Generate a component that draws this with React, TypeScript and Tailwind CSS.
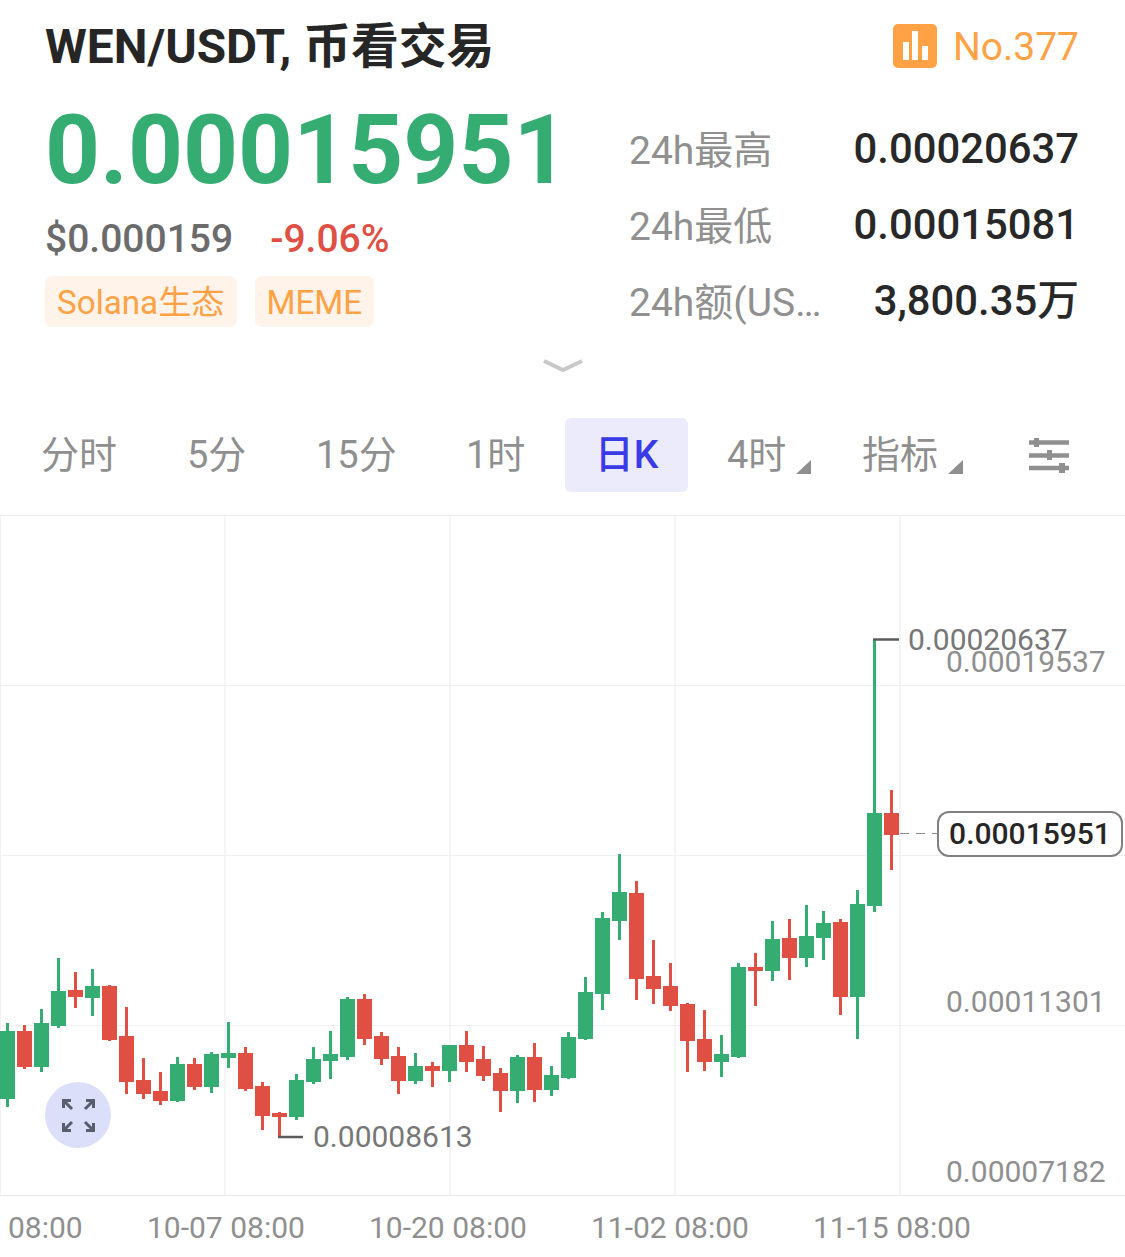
const F = "font-['Roboto','Noto_Sans_CJK_SC',sans-serif]";

type C = [number, number, number, number, number, number];
// [x, up(1)/down(0), wickTop, bodyTop, bodyBottom, wickBottom]
const candles: C[] = [
  [7.5,1,1023,1031,1099,1107],[24.5,0,1025,1031,1067,1069],[41.5,1,1009,1023,1067,1072],[58.5,1,958,991,1026,1028],
  [75.5,0,972,990,997,1008],[92.5,1,969,986,998,1016],[109.5,0,985,986,1040,1041],[126.5,0,1007,1036,1082,1094],
  [143.5,0,1058,1080,1094,1099],[160.5,0,1072,1091,1101,1105],[177.5,1,1057,1064,1101,1102],[194.5,0,1058,1064,1087,1090],
  [211.5,1,1052,1054,1087,1093],[228.5,1,1022,1053,1058,1068],[245.5,0,1047,1053,1089,1091],[262.5,0,1082,1086,1116,1130],
  [279.5,0,1112,1113,1117,1137],[296.5,1,1074,1080,1117,1120],[313.5,1,1047,1059,1082,1084],[330.5,1,1031,1054,1061,1079],
  [347.5,1,997,999,1057,1060],[364.5,0,994,999,1039,1045],[381.5,0,1032,1036,1059,1065],[398.5,0,1047,1056,1081,1094],
  [415.5,1,1053,1066,1081,1084],[432.5,0,1062,1066,1071,1087],[449.5,1,1045,1045,1071,1082],[466.5,0,1031,1045,1062,1072],
  [483.5,0,1046,1059,1076,1081],[500.5,0,1068,1073,1091,1112],[517.5,1,1055,1057,1091,1103],[534.5,0,1043,1057,1090,1102],
  [551.5,1,1066,1075,1090,1096],[568.5,1,1032,1037,1078,1079],[585.5,1,977,992,1039,1040],[602.5,1,912,918,994,1010],
  [619.5,1,854,892,921,940],[636.5,0,881,893,979,1000],[653.5,0,940,976,989,1004],[670.5,0,963,986,1006,1011],
  [687.5,0,1003,1004,1041,1072],[704.5,0,1010,1039,1062,1071],[721.5,1,1035,1054,1062,1077],[738.5,1,963,967,1057,1058],
  [755.5,0,953,967,971,1006],[772.5,1,921,939,971,981],[789.5,0,919,938,958,980],[806.5,1,905,936,958,967],
  [823.5,1,911,923,938,960],[840.5,0,919,922,997,1015],[857.5,1,890,904,997,1039],[874.5,1,639,813,906,912],
  [891.5,0,790,813,835,870],
];

function ChartLayer() {
  const top = 515;
  return (
    <svg width="1125" height="681" viewBox="0 515 1125 681" className="block">
      {[685.5, 855.5, 1025.5].map((y) => (
        <line key={y} x1="0" x2="1125" y1={y} y2={y} stroke="#f0f0f4" strokeWidth="1" />
      ))}
      <line x1="0" x2="1125" y1={top + 0.5} y2={top + 0.5} stroke="#ececf0" />
      <line x1="0" x2="1125" y1="1195.5" y2="1195.5" stroke="#e8e8ec" />
      {[0.5, 225, 450, 675, 900].map((x) => (
        <line key={x} x1={x} x2={x} y1="515" y2="1195" stroke="#f2f2f5" strokeWidth={x < 1 ? 1 : 1.5} />
      ))}
      {candles.map(([x, up, wt, bt, bb, wb]) => (
        <g key={x} fill={up ? "#35ad72" : "#e04f43"}>
          <rect x={x - 1.5} y={wt} width="3" height={wb - wt} />
          <rect x={x - 7.5} y={bt} width="15" height={Math.max(bb - bt, 1)} />
        </g>
      ))}
      <path d="M873 639.500H899" stroke="#5c5c5c" strokeWidth="2.500" />
      <path d="M278 1137H303" stroke="#5c5c5c" strokeWidth="2.500" />
      <path d="M900 833.500H937" stroke="#888" strokeWidth="1" strokeDasharray="9 7" />
    </svg>
  );
}

function Label({ className, children }: { className: string; children: React.ReactNode }) {
  return <span className={`absolute text-[30px] leading-[36px] text-[#8f8f8f] ${className}`}>{children}</span>;
}

function Stat({ label, value }: { label: string; value: string }) {
  return (
    <div className="flex h-[76px] items-center justify-between">
      <span className="mt-[3px] w-[196px] truncate text-[39px] text-[#909090]">{label}</span>
      <span className="mb-[1px] text-[41.800px] font-medium text-[#282828]">{value}</span>
    </div>
  );
}

function Tab({ children, className = "" }: { children: React.ReactNode; className?: string }) {
  return <span className={`relative text-[38px] leading-[74px] text-[#8f8f8f] ${className}`}>{children}</span>;
}

function Corner() {
  return (
    <svg width="15" height="14" viewBox="0 0 15 14" className="absolute right-[-25px] top-[27px]">
      <path d="M15 0V14H0Z" fill="#8f8f8f" />
    </svg>
  );
}

function XTick({ className, children }: { className: string; children: React.ReactNode }) {
  return <span className={`absolute top-[14px] text-[30px] leading-[36px] text-[#8f8f8f] ${className}`}>{children}</span>;
}

export default function App() {
  return (
    <div className={`${F} relative h-[1257px] w-[1125px] overflow-hidden bg-white`}>
      <header className="flex h-[92px] items-center justify-between pl-[45px] pr-[46px]">
        <h1 className="mt-[3px] text-[47.800px] font-bold text-[#262626]">WEN/USDT, 币看交易</h1>
        <div className="flex items-center gap-[16px]">
          <svg width="44" height="44" viewBox="0 0 44 44" className="mt-[-1px]">
            <rect width="44" height="44" rx="5" fill="#ffa245" />
            <path d="M10 18h6v18h-6zM19 7h6v29h-6zM29 22h6v14h-6z" fill="#fff" />
          </svg>
          <span className="mt-[2px] text-[39px] text-[#ffa245]">No.377</span>
        </div>
      </header>

      <section className="flex h-[258px] justify-between pl-[45px] pr-[46px]">
        <div>
          <div className="h-[120px] text-[96px] leading-[116px] font-bold text-[#35ad72]">0.00015951</div>
          <div className="flex h-[54px] items-center gap-[37px] text-[39px] font-medium">
            <span className="text-[#6b6b6b]">$0.000159</span>
            <span className="text-[#e04f43]">-9.06%</span>
          </div>
          <div className="mt-[10px] flex gap-[18px]">
            <span className="flex h-[51px] items-center rounded-[7px] bg-[#fff3ea] px-[12px] pt-[3px] text-[33.200px] text-[#ffa245]">Solana生态</span>
            <span className="flex h-[51px] items-center rounded-[7px] bg-[#fff3ea] px-[12px] pt-[3px] text-[33.200px] text-[#ffa245]">MEME</span>
          </div>
        </div>
        <div className="w-[450px] pt-[20px]">
          <Stat label="24h最高" value="0.00020637" />
          <Stat label="24h最低" value="0.00015081" />
          <Stat label="24h额(USDT)" value="3,800.35万" />
        </div>
      </section>

      <div className="flex h-[68px] justify-center pt-[8px]">
        <svg width="42" height="16" viewBox="0 0 42 16">
          <path d="M2 3L21 12L40 3" fill="none" stroke="#c9c9c9" strokeWidth="4" />
        </svg>
      </div>

      <nav className="flex h-[97px] items-start">
        <div className="relative flex h-[74px] w-full items-center">
          <div className="ml-[41px] w-[146px]"><Tab>分时</Tab></div>
          <div className="w-[129px]"><Tab>5分</Tab></div>
          <div className="w-[150px]"><Tab>15分</Tab></div>
          <div className="w-[99px]"><Tab>1时</Tab></div>
          <div className="flex h-[74px] w-[123px] items-center justify-center rounded-[6px] bg-[#ebebfb] text-[39px] font-medium text-[#3a3ae6]">日K</div>
          <div className="ml-[39px] w-[135px]"><Tab>4时<Corner /></Tab></div>
          <div className="w-[167px]"><Tab>指标<Corner /></Tab></div>
          <svg width="40" height="35" viewBox="0 0 40 35" className="mt-[1px]">
            <path d="M0 4.500h40M0 17.500h40M0 30h40" stroke="#8f8f8f" strokeWidth="4.500" />
            <path d="M5 0h5v9h-5zM18 12h5v10h-5zM30 25h6v10h-6z" fill="#8f8f8f" />
          </svg>
        </div>
      </nav>

      <div className="relative">
        <ChartLayer />
        <Label className="left-[908px] top-[107px] text-[#777]">0.00020637</Label>
        <Label className="left-[946px] top-[129px]">0.00019537</Label>
        <Label className="left-[946px] top-[469px]">0.00011301</Label>
        <Label className="left-[946px] top-[639px]">0.00007182</Label>
        <Label className="left-[313px] top-[604px] text-[#777]">0.00008613</Label>
        <span className="absolute left-[937px] top-[296px] flex h-[46px] w-[186px] items-center justify-center rounded-[12px] border-2 border-[#808080] bg-white pb-[1px] text-[30px] font-medium text-[#262626]">0.00015951</span>
        <div className="absolute left-[45px] top-[567px] flex h-[66px] w-[66px] items-center justify-center rounded-full bg-[#dcdffa]">
          <svg width="33" height="33" viewBox="0 0 33 33" fill="none" stroke="#5a5d6e" strokeWidth="3">
            <path d="M1.500 9V1.500H9M1.500 1.500L10 10" />
            <path d="M24 1.500H31.500V9M31.500 1.500L23 10" />
            <path d="M1.500 24V31.500H9M1.500 31.500L10 23" />
            <path d="M24 31.500H31.500V24M31.500 31.500L23 23" />
          </svg>
        </div>
      </div>

      <footer className="relative h-[61px]">
        <XTick className="left-[8px]">08:00</XTick>
        <XTick className="left-[147px]">10-07 08:00</XTick>
        <XTick className="left-[369px]">10-20 08:00</XTick>
        <XTick className="left-[591px]">11-02 08:00</XTick>
        <XTick className="left-[813px]">11-15 08:00</XTick>
      </footer>
    </div>
  );
}
